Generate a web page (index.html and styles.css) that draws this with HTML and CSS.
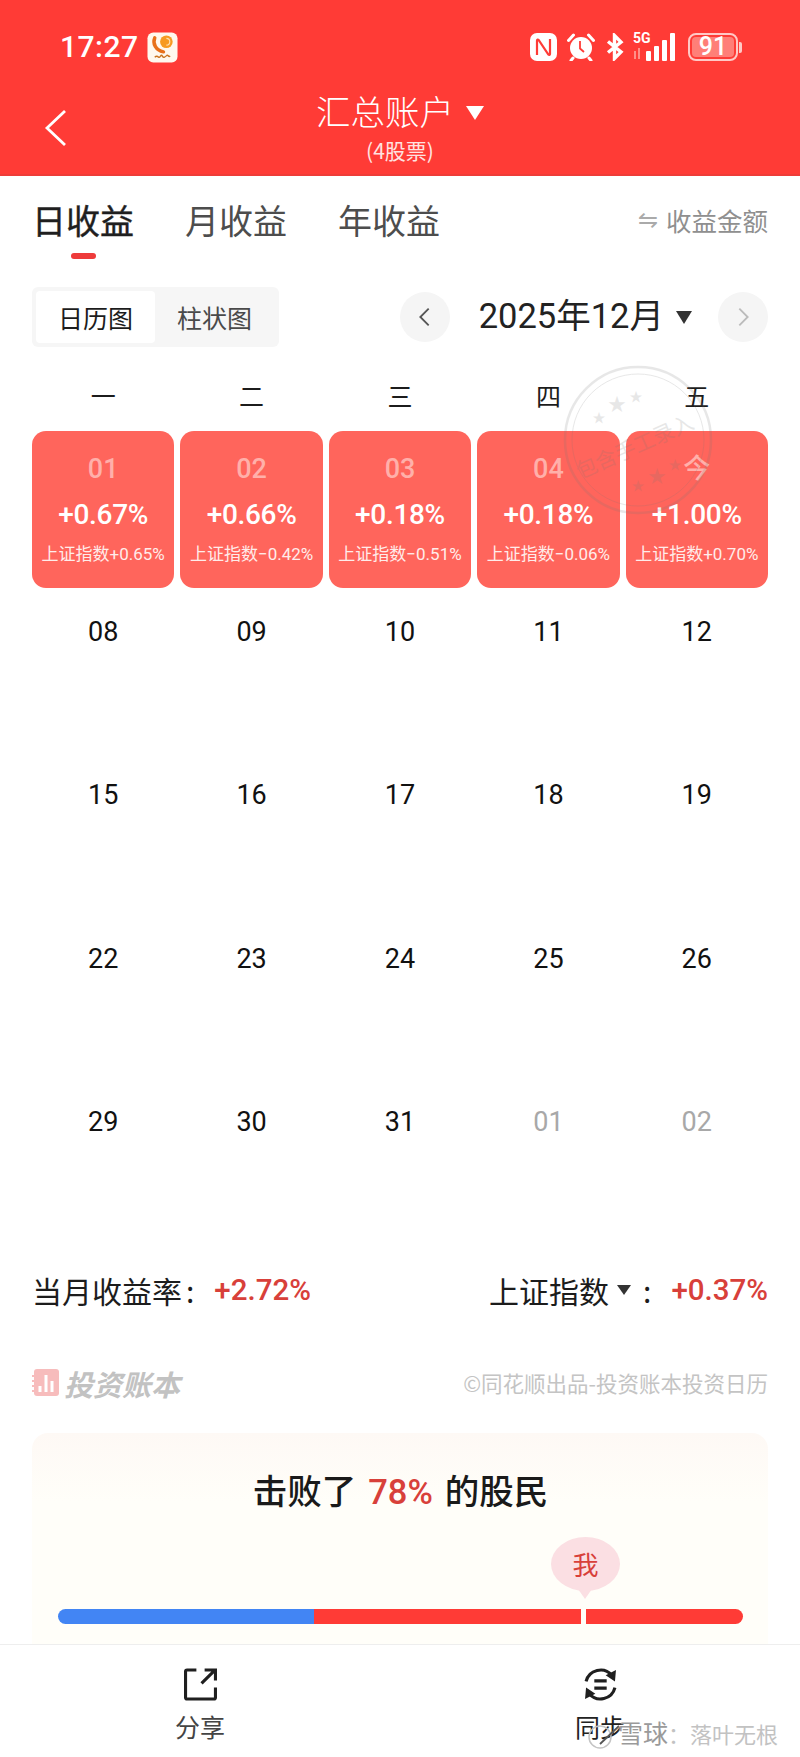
FILE: index.html
```html
<!DOCTYPE html>
<html lang="zh-CN">
<head>
  <meta charset="UTF-8">
  <meta name="viewport" content="width=device-width, initial-scale=1.0">
  <title>投资账本</title>
  <link rel="stylesheet" href="styles.css">
</head>
<body>
  <div class="page">
    <div class="app-header">
      <div class="status-bar">
        <div class="status-left">
          <span class="clock">17:27</span>
          <svg class="app-badge" viewBox="0 0 32 32">
            <rect x="0.5" y="0.5" width="31" height="31" rx="6" fill="#fff8ee"/>
            <circle cx="20" cy="10" r="6.500" fill="#f79a22"/>
            <path d="M20 6.500a3.500 3.500 0 0 1 0 7" fill="none" stroke="#fde0b0" stroke-width="1.200"/>
            <path d="M8 6c-2.500 6 1 13 9 14.500" fill="none" stroke="#e8701a" stroke-width="3.600" stroke-linecap="round"/>
            <path d="M8 26c2-2 3-1 4 0s2-2 3-2 1 3 3 2 2-2 3-2 1 2 3 1" fill="none" stroke="#c9731f" stroke-width="1.400"/>
          </svg>
        </div>
        <div class="status-right">
          <svg class="ic-nfc" viewBox="0 0 27 28">
            <rect width="27" height="28" rx="7" fill="#fff"/>
            <path d="M7 22V7.500c0-1 1-1.200 1.600-.5l9.800 14.500c.6.700 1.600.5 1.600-.5V6" fill="none" stroke="#ff3b36" stroke-width="2.200"/>
          </svg>
          <svg class="ic-alarm" viewBox="0 0 28 28">
            <circle cx="14" cy="15" r="11" fill="#fff"/>
            <path d="M13 8v7.500l4 3.500" fill="none" stroke="#ff3b36" stroke-width="1.800"/>
            <path d="M1.500 7.500 6.500 2M26.500 7.500 21.500 2M6 25l-2 2.500M22 25l2 2.500" stroke="#fff" stroke-width="3" stroke-linecap="round"/>
          </svg>
          <svg class="ic-bt" viewBox="0 0 20 28">
            <path d="M3 8.500 16 19l-6.500 6.500v-23L16 9 3 19.500" fill="none" stroke="#fff" stroke-width="3.400"/>
          </svg>
          <div class="signal">
            <span class="net-label">5G</span>
            <svg class="ic-signal" viewBox="0 0 46 28">
              <path d="M3 18v8M7 15v11" stroke="#ff8f88" stroke-width="2"/>
              <rect x="14" y="18" width="5" height="10" rx="1" fill="#fff"/>
              <rect x="22" y="13" width="5" height="15" rx="1" fill="#fff"/>
              <rect x="30" y="7" width="5" height="21" rx="1" fill="#fff"/>
              <rect x="38" y="0" width="5" height="28" rx="1" fill="#fff"/>
            </svg>
          </div>
          <div class="battery">
            <div class="battery-body"><span class="battery-num">91</span></div>
            <span class="battery-nub"></span>
          </div>
        </div>
      </div>
      <div class="title-bar">
        <svg class="back-arrow" viewBox="0 0 24 38">
          <path d="M21 2 3 19l18 17" fill="none" stroke="#fff" stroke-width="2.800"/>
        </svg>
        <div class="title-row"><span class="title-text">汇总账户</span><span class="title-caret"></span></div>
        <div class="title-sub">(4股票)</div>
      </div>
    </div>

    <div class="content">
      <div class="tabs">
        <span class="tab active">日收益</span>
        <span class="tab">月收益</span>
        <span class="tab">年收益</span>
        <span class="amount-switch"><span class="swap-glyph">⇋</span>收益金额</span>
      </div>

      <div class="toolbar">
        <div class="segment">
          <span class="seg-item on">日历图</span>
          <span class="seg-item">柱状图</span>
        </div>
        <div class="month-nav">
          <span class="nav-btn">
            <svg viewBox="0 0 14 24"><path d="M12 2 2 12l10 10" fill="none" stroke="#555" stroke-width="2.200"/></svg>
          </span>
          <span class="month-label">2025年12月</span>
          <span class="month-caret"></span>
          <span class="nav-btn">
            <svg viewBox="0 0 14 24"><path d="m2 2 10 10L2 22" fill="none" stroke="#bbb" stroke-width="2.200"/></svg>
          </span>
        </div>
      </div>

      <div class="weekdays">
        <span>一</span><span>二</span><span>三</span><span>四</span><span>五</span>
      </div>

      <div class="calendar">
        <div class="day gain"><span class="day-num">01</span><span class="day-rate">+0.67%</span><span class="day-index">上证指数+0.65%</span></div>
        <div class="day gain"><span class="day-num">02</span><span class="day-rate">+0.66%</span><span class="day-index">上证指数−0.42%</span></div>
        <div class="day gain"><span class="day-num">03</span><span class="day-rate">+0.18%</span><span class="day-index">上证指数−0.51%</span></div>
        <div class="day gain"><span class="day-num">04</span><span class="day-rate">+0.18%</span><span class="day-index">上证指数−0.06%</span></div>
        <div class="day gain"><span class="day-num">今</span><span class="day-rate">+1.00%</span><span class="day-index">上证指数+0.70%</span></div>
        <div class="day"><span class="day-num">08</span></div>
        <div class="day"><span class="day-num">09</span></div>
        <div class="day"><span class="day-num">10</span></div>
        <div class="day"><span class="day-num">11</span></div>
        <div class="day"><span class="day-num">12</span></div>
        <div class="day"><span class="day-num">15</span></div>
        <div class="day"><span class="day-num">16</span></div>
        <div class="day"><span class="day-num">17</span></div>
        <div class="day"><span class="day-num">18</span></div>
        <div class="day"><span class="day-num">19</span></div>
        <div class="day"><span class="day-num">22</span></div>
        <div class="day"><span class="day-num">23</span></div>
        <div class="day"><span class="day-num">24</span></div>
        <div class="day"><span class="day-num">25</span></div>
        <div class="day"><span class="day-num">26</span></div>
        <div class="day"><span class="day-num">29</span></div>
        <div class="day"><span class="day-num">30</span></div>
        <div class="day"><span class="day-num">31</span></div>
        <div class="day muted"><span class="day-num">01</span></div>
        <div class="day muted"><span class="day-num">02</span></div>
      </div>

      <div class="summary">
        <div class="summary-item">当月收益率<span class="colon">:</span><span class="pct">+2.72%</span></div>
        <div class="summary-item">上证指数<span class="mini-caret"></span><span class="colon">:</span><span class="pct">+0.37%</span></div>
      </div>

      <div class="brand-row">
        <div class="brand">
          <svg class="brand-mark" viewBox="0 0 27 27">
            <rect x="2" width="25" height="27" rx="3" fill="#f7bcbc"/>
            <path d="M0 7h4M0 12h4M0 17h4M0 22h4" stroke="#f7bcbc" stroke-width="2"/>
            <path d="M8 17v6M14 6v17M20 12v11" stroke="#fff" stroke-width="3"/>
          </svg>
          <span class="brand-name">投资账本</span>
        </div>
        <span class="brand-note">©同花顺出品-投资账本投资日历</span>
      </div>

      <div class="beat-card">
        <div class="beat-title">击败了<span class="beat-pct">78%</span>的股民</div>
        <div class="me-wrap"><span class="me-bubble">我</span></div>
        <div class="beat-bar">
          <span class="bar-blue"></span>
          <span class="bar-red"></span>
          <span class="bar-cut"></span>
          <span class="bar-red end"></span>
        </div>
      </div>
    </div>

    <div class="bottom-bar">
      <div class="bottom-action">
        <svg class="action-icon" viewBox="0 0 32 32">
          <path d="M12 2H3a1.500 1.500 0 0 0-1.500 1.500v25A1.500 1.500 0 0 0 3 30h26a1.500 1.500 0 0 0 1.500-1.500V19" fill="none" stroke="#1f1f1f" stroke-width="3"/>
          <path d="M17 15 29 3M20 2h10.500v10" fill="none" stroke="#1f1f1f" stroke-width="3"/>
        </svg>
        <span>分享</span>
      </div>
      <div class="bottom-action dark">
        <svg class="action-icon" viewBox="1 1 32 32">
          <path d="M3 14A14.500 14.500 0 0 1 28 8M31 20A14.500 14.500 0 0 1 6 26" fill="none" stroke="#1f1f1f" stroke-width="3"/>
          <path d="m32 3-1 11-9-6zM2 31l1-11 9 6z" fill="#1f1f1f"/>
          <path d="M11 13.500h12M11 20.500h12" stroke="#1f1f1f" stroke-width="3"/>
        </svg>
        <span>同步</span>
      </div>
    </div>

    <!-- 水印和印章盖在内容上面 -->
    <svg class="stamp" viewBox="0 0 150 150">
      <circle cx="75" cy="75" r="73" fill="none" stroke="#777" stroke-width="2.500"/>
      <circle cx="75" cy="75" r="66" fill="none" stroke="#777" stroke-width="1"/>
      <g fill="#777" text-anchor="middle">
        <text x="36" y="57" font-size="13">★</text>
        <text x="54" y="46" font-size="18">★</text>
        <text x="73" y="36" font-size="13">★</text>
        <text x="75" y="125" font-size="13">★</text>
        <text x="94" y="118" font-size="18">★</text>
        <text x="112" y="104" font-size="13">★</text>
      </g>
      <text class="stamp-text" x="72" y="89" transform="rotate(-24 72 82)">包含手工录入</text>
    </svg>
    <div class="watermark">
      <svg class="wm-logo" viewBox="0 0 36 28">
        <circle cx="14" cy="15" r="11" fill="none" stroke="#c4c4c4" stroke-width="1.500"/>
        <path d="M14 22 33 4" stroke="#555" stroke-width="1.800"/>
      </svg>
      <span class="wm-text"><span class="wm-dark">雪球</span>：落叶无根</span>
    </div>
  </div>
</body>
</html>
```

FILE: styles.css
```css
* {
  box-sizing: border-box;
  margin: 0;
  padding: 0;
}
html, body {
  width: 800px;
  height: 1757px;
  overflow: hidden;
  background: #fff;
}
body {
  font-family: "Noto Sans CJK SC", "Noto Sans", sans-serif;
  color: #1c1c1c;
}
.page {
  position: relative;
  width: 800px;
  height: 1757px;
  display: flex;
  flex-direction: column;
  overflow: hidden;
}

/* 顶部红色区域 */
.app-header {
  height: 176px;
  background: #ff3b36;
  color: #fff;
  border-bottom: 2px solid #ee3c38;
  flex: none;
}
.status-bar {
  height: 92px;
  padding: 32px 58px 0 60px;
  display: flex;
  justify-content: space-between;
  align-items: flex-start;
}
.status-left {
  display: flex;
  align-items: center;
  gap: 8px;
  height: 30px;
}
.clock {
  font-family: Roboto, sans-serif;
  font-size: 30px;
  font-weight: 500;
  letter-spacing: 0.5px;
  line-height: 30px;
}
.app-badge {
  width: 31px;
  height: 31px;
}
.status-right {
  display: flex;
  align-items: flex-start;
  height: 30px;
  padding-top: 1px;
}
.ic-nfc {
  width: 27px;
  height: 28px;
}
.ic-alarm {
  width: 28px;
  height: 28px;
  margin-left: 10px;
}
.ic-bt {
  width: 20px;
  height: 28px;
  margin-left: 10px;
}
.signal {
  position: relative;
  width: 46px;
  height: 28px;
  margin-left: 7px;
}
.net-label {
  position: absolute;
  left: 1px;
  top: -2px;
  font-family: Roboto, sans-serif;
  font-size: 14px;
  font-weight: 700;
  line-height: 15px;
}
.ic-signal {
  width: 46px;
  height: 28px;
  display: block;
}
.battery {
  display: flex;
  align-items: center;
  margin-left: 10px;
}
.battery-body {
  width: 50px;
  height: 28px;
  border: 2px solid #ffc9c6;
  border-radius: 8px;
  padding: 2px;
  display: flex;
}
.battery-num {
  flex: 1;
  background: #ff7f78;
  border-radius: 4px;
  font-family: Roboto, sans-serif;
  font-size: 25px;
  font-weight: 500;
  line-height: 20px;
  text-align: center;
}
.battery-nub {
  width: 3px;
  height: 11px;
  margin-left: 1px;
  background: #ffc9c6;
  border-radius: 0 2px 2px 0;
}
.title-bar {
  position: relative;
  display: flex;
  flex-direction: column;
  align-items: center;
}
.back-arrow {
  position: absolute;
  left: 44px;
  top: 17px;
  width: 24px;
  height: 38px;
}
.title-row {
  display: flex;
  align-items: center;
  height: 38px;
  margin-top: -1px;
}
.title-text {
  font-size: 34.500px;
  line-height: 38px;
  font-weight: 300;
}
.title-caret {
  width: 0;
  height: 0;
  margin: 6px 0 0 12px;
  border-left: 9px solid transparent;
  border-right: 9px solid transparent;
  border-top: 14px solid #fff;
}
.title-sub {
  font-size: 21px;
  line-height: 28px;
  margin-top: 7px;
  color: #ffe3e1;
}

/* 主体 */
.content {
  flex: 1;
  min-height: 0;
  overflow: hidden;
  padding: 0 32px;
}
.tabs {
  display: flex;
  align-items: center;
  height: 43px;
  margin-top: 22px;
  gap: 51px;
}
.tab {
  position: relative;
  font-size: 34px;
  line-height: 43px;
  color: #4d4d4d;
}
.tab.active {
  color: #1f1f1f;
  -webkit-text-stroke: 0.4px #1f1f1f;
}
.tab.active::after {
  content: "";
  position: absolute;
  left: 39px;
  top: 55px;
  width: 25px;
  height: 6px;
  border-radius: 3px;
  background: #ee3b3b;
}
.amount-switch {
  margin-left: auto;
  display: flex;
  align-items: center;
  font-size: 25.500px;
  color: #8f8f8f;
}
.swap-glyph {
  font-family: "DejaVu Sans", sans-serif;
  font-size: 24px;
  margin-right: 8px;
  color: #aaa;
}
.toolbar {
  display: flex;
  justify-content: space-between;
  align-items: center;
  margin-top: 46px;
  height: 60px;
}
.segment {
  display: flex;
  width: 247px;
  height: 60px;
  padding: 4px;
  background: #f6f6f6;
  border-radius: 6px;
}
.seg-item {
  width: 119px;
  font-size: 25px;
  line-height: 52px;
  text-align: center;
  color: #4a4a4a;
}
.seg-item.on {
  background: #fff;
  border-radius: 4px;
  color: #1c1c1c;
}
.month-nav {
  display: flex;
  align-items: center;
}
.nav-btn {
  width: 50px;
  height: 50px;
  border-radius: 50%;
  background: #f5f5f5;
  display: flex;
  align-items: center;
  justify-content: center;
}
.nav-btn svg {
  width: 13px;
  height: 20px;
}
.month-label {
  font-family: Roboto, "Noto Sans CJK SC", sans-serif;
  font-size: 34.500px;
  line-height: 44px;
  margin-left: 29px;
  margin-top: -2px;
  color: #222;
}
.month-caret {
  width: 0;
  height: 0;
  margin: 0 26px 0 12px;
  border-left: 8px solid transparent;
  border-right: 8px solid transparent;
  border-top: 13px solid #333;
}
.weekdays {
  display: grid;
  grid-template-columns: repeat(5, 1fr);
  gap: 6px;
  height: 36px;
  margin-top: 30px;
  font-size: 25px;
  line-height: 36px;
  text-align: center;
}
.calendar {
  display: grid;
  grid-template-columns: repeat(5, 1fr);
  grid-auto-rows: 157.200px;
  gap: 6px;
  margin-top: 18px;
}
.day {
  display: flex;
  flex-direction: column;
  align-items: center;
  padding-top: 22px;
  font-family: Roboto, "Noto Sans CJK SC", sans-serif;
}
.day-num {
  font-size: 27px;
  line-height: 32px;
  color: #111;
}
.day.muted .day-num {
  color: #a8a8a8;
}
.day.gain {
  background: #ff655c;
  border-radius: 14px;
  color: #fff;
}
.day.gain .day-num {
  color: #ffb0aa;
  font-weight: 500;
}
.day-rate {
  font-size: 28px;
  font-weight: 500;
  letter-spacing: -0.3px;
  line-height: 36px;
  margin-top: 12px;
}
.day-index {
  font-size: 17px;
  line-height: 22px;
  margin-top: 10px;
  white-space: nowrap;
  color: #ffecea;
}
.summary {
  display: flex;
  justify-content: space-between;
  align-items: center;
  margin-top: 27px;
  height: 44px;
}
.summary-item {
  display: flex;
  align-items: center;
  font-size: 30px;
  line-height: 44px;
  color: #1c1c1c;
}
.colon {
  margin: 0 14px 0 4px;
}
.pct {
  font-family: Roboto, sans-serif;
  font-size: 29.500px;
  font-weight: 500;
  color: #d8403a;
  margin-left: 6px;
}
.mini-caret {
  width: 0;
  height: 0;
  margin: 0 8px;
  border-left: 7px solid transparent;
  border-right: 7px solid transparent;
  border-top: 10px solid #333;
}
.brand-row {
  display: flex;
  justify-content: space-between;
  align-items: center;
  margin-top: 51px;
  height: 40px;
}
.brand {
  display: flex;
  align-items: center;
  gap: 5px;
}
.brand-mark {
  width: 27px;
  height: 27px;
}
.brand-name {
  font-size: 29px;
  font-weight: 700;
  font-style: italic;
  color: #c2c2c2;
  line-height: 34px;
}
.brand-note {
  font-size: 21.500px;
  color: #c4c4c4;
}
.beat-card {
  margin-top: 30px;
  height: 230px;
  border-radius: 16px;
  background: linear-gradient(#fef9f5, #fffef9 30%);
  padding: 32px 25px 0 26px;
}
.beat-title {
  text-align: center;
  font-size: 34.500px;
  line-height: 48px;
  font-weight: 500;
  color: #1a1a1a;
}
.beat-pct {
  font-family: Roboto, sans-serif;
  color: #d8403a;
  margin: 0 12px;
}
.me-wrap {
  display: flex;
  margin-top: 21px;
  padding-left: 493px;
  height: 72px;
}
.me-bubble {
  position: relative;
  width: 69px;
  height: 54px;
  border-radius: 50%;
  background: #fbdfe3;
  color: #d8403a;
  font-size: 26px;
  line-height: 54px;
  text-align: center;
}
.me-bubble::after {
  content: "";
  position: absolute;
  left: 27px;
  top: 52px;
  border-left: 7px solid transparent;
  border-right: 7px solid transparent;
  border-top: 10px solid #fbdfe3;
}
.beat-bar {
  display: flex;
  height: 15px;
}
.bar-blue {
  width: 256px;
  background: #4285f4;
  border-radius: 8px 0 0 8px;
}
.bar-red {
  flex: 1;
  background: #ff3b36;
}
.bar-red.end {
  flex: none;
  width: 157px;
  border-radius: 0 8px 8px 0;
}
.bar-cut {
  width: 5px;
}

/* 底部操作栏 */
.bottom-bar {
  flex: none;
  height: 113px;
  display: grid;
  grid-template-columns: 1fr 1fr;
  background: #fff;
  border-top: 1px solid #eee;
  position: relative;
}
.bottom-action {
  display: flex;
  flex-direction: column;
  align-items: center;
  padding-top: 23px;
  font-size: 25px;
  line-height: 36px;
  color: #444;
}
.bottom-action.dark {
  color: #222;
}
.action-icon {
  width: 33px;
  height: 33px;
  margin-bottom: 7px;
}

/* 盖在上面的东西 */
.stamp {
  position: absolute;
  left: 563px;
  top: 365px;
  width: 150px;
  height: 150px;
  opacity: 0.17;
  overflow: visible;
  pointer-events: none;
}
.stamp-text {
  font-size: 21px;
  fill: #777;
  text-anchor: middle;
}
.watermark {
  position: absolute;
  left: 586px;
  top: 1715px;
  display: flex;
  align-items: center;
  pointer-events: none;
}
.wm-logo {
  width: 36px;
  height: 28px;
  margin-top: 6px;
}
.wm-text {
  font-size: 22px;
  line-height: 34px;
  color: #c2c2c2;
  text-shadow: 0 0 2px #fff;
}
.wm-dark {
  font-size: 25px;
  margin-left: -4px;
  color: #9a9a9a;
}
```
